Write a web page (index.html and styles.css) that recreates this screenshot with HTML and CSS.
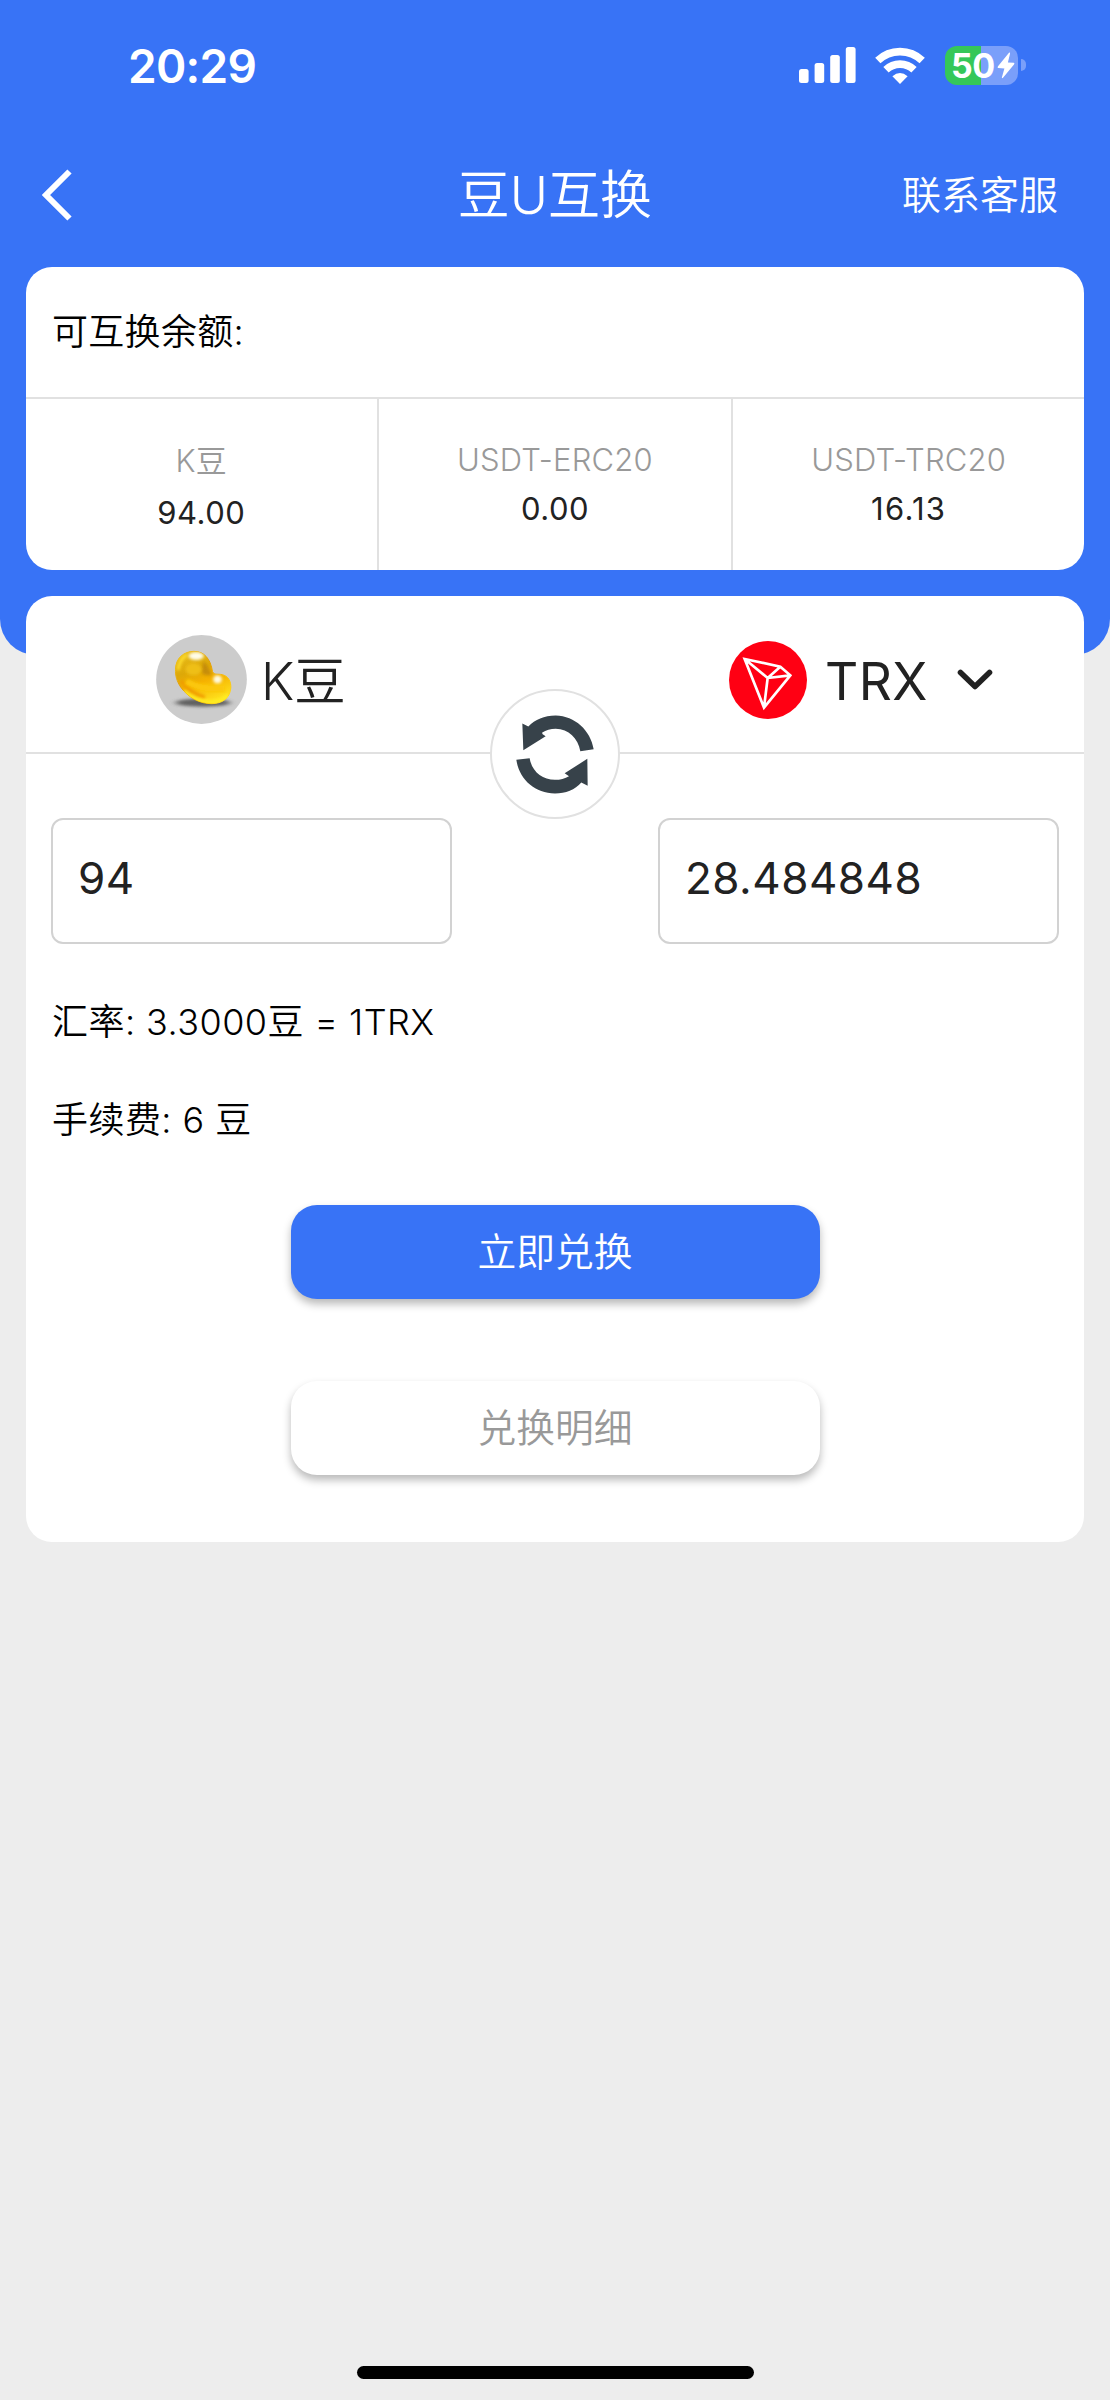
FILE: index.html
```html
<!DOCTYPE html>
<html lang="zh-CN">
<head>
<meta charset="utf-8">
<title>豆U互换</title>
<link rel="stylesheet" href="styles.css">
</head>
<body>
<div class="screen">
  <div class="top-bg">
    <div class="status">
      <span class="clock">20:29</span>
      <div class="status-icons">
        <svg class="signal" viewBox="0 0 57 36"><g fill="#fff"><rect x="0" y="22" width="9.6" height="14" rx="2.5"/><rect x="15.6" y="16" width="9.6" height="20" rx="2.5"/><rect x="31.2" y="8" width="9.6" height="28" rx="2.5"/><rect x="46.8" y="0" width="9.8" height="36" rx="2.5"/></g></svg>
        <svg class="wifi" viewBox="0 0 50 37"><g fill="none" stroke="#fff" stroke-width="7.6"><path d="M2.8 13.6A32 32 0 0 1 47.2 13.6"/><path d="M11 22.8A20 20 0 0 1 39 22.8"/></g><path d="M25 37L17.4 29.2Q25 22.8 32.6 29.2Z" fill="#fff"/></svg>
        <div class="battery">
          <div class="battery-body"><span>50</span><svg class="bolt" viewBox="0 0 18 27"><path d="M12 .8Q13.4 0 13 1.8L10.9 10.4L16.8 10.8Q18 11.2 17 12.4L6 25.8Q4.400 27 5 25L7.400 16.400L1.200 16Q0 15.600 1 14.200Z" fill="#fff"/></svg></div>
          <div class="battery-cap"></div>
        </div>
      </div>
    </div>
    <header class="nav">
      <svg class="back" viewBox="0 0 30 52"><path d="M27.500 2.500L4 26L27.500 49.500" fill="none" stroke="#fff" stroke-width="6"/></svg>
      <h1 class="title">豆U互换</h1>
      <a class="support">联系客服</a>
    </header>
  </div>

  <main class="content">
    <section class="card balance">
      <h2 class="balance-title">可互换余额:</h2>
      <div class="balance-row">
        <div class="cell cell-cjk"><span class="label">K豆</span><span class="amount">94.00</span></div>
        <div class="cell"><span class="label">USDT-ERC20</span><span class="amount">0.00</span></div>
        <div class="cell"><span class="label">USDT-TRC20</span><span class="amount amount-wide">16.13</span></div>
      </div>
    </section>

    <section class="card swap">
      <div class="pair">
        <div class="coin from">
          <svg class="bean" viewBox="50 45 272 267">
            <defs>
              <linearGradient id="gold" x1=".2" y1="0" x2=".6" y2="1">
                <stop offset="0" stop-color="#e8bd1c"/><stop offset=".35" stop-color="#dda808"/><stop offset=".6" stop-color="#f5b100"/><stop offset="1" stop-color="#ffe21e"/>
              </linearGradient>
              <linearGradient id="rim" x1="0" y1="0" x2="1" y2="1"><stop offset="0" stop-color="#f0c81c"/><stop offset=".4" stop-color="#e39b00"/><stop offset=".75" stop-color="#ffc400"/><stop offset="1" stop-color="#ffe030"/></linearGradient>
              <filter id="soft" x="-50%" y="-50%" width="200%" height="200%"><feGaussianBlur stdDeviation="4.5"/></filter>
              <filter id="shade" x="-50%" y="-150%" width="200%" height="400%"><feGaussianBlur stdDeviation="9 4"/></filter>
              <clipPath id="beanClip"><path d="M108 148C108 114 134 94 163 94C194 94 213 116 219 155C225 166 236 161 248 164C266 168 275 184 274 204C271 236 247 251 216 251C180 251 147 233 124 202C112 184 107 167 108 148Z"/></clipPath>
            </defs>
            <ellipse cx="186" cy="178.500" rx="136" ry="133.500" fill="#ccc"/>
            <ellipse cx="190" cy="248" rx="82" ry="12" fill="#505050" opacity=".85" filter="url(#shade)"/>
            <path d="M108 148C108 114 134 94 163 94C194 94 213 116 219 155C225 166 236 161 248 164C266 168 275 184 274 204C271 236 247 251 216 251C180 251 147 233 124 202C112 184 107 167 108 148Z" fill="url(#gold)" stroke="url(#rim)" stroke-width="3"/>
            <g clip-path="url(#beanClip)">
              <path d="M192 122Q208 140 217 164Q200 170 186 158Z" fill="#b8800a" filter="url(#soft)" opacity=".7"/>
              <path d="M116 150Q118 120 142 104" fill="none" stroke="#ffdf2e" stroke-width="9" filter="url(#soft)"/>
              <path d="M125 182Q145 216 196 232" fill="none" stroke="#f09a00" stroke-width="10" filter="url(#soft)"/>
              <path d="M140 184Q185 210 255 206" fill="none" stroke="#fcc808" stroke-width="18" filter="url(#soft)"/>
              <ellipse cx="162" cy="148" rx="24" ry="18" fill="#efbf14" filter="url(#soft)"/>
              <path d="M133 214Q170 248 218 246Q248 244 266 226" fill="none" stroke="#ffee20" stroke-width="11" filter="url(#soft)"/>
              <ellipse cx="170" cy="108" rx="23" ry="12" fill="#fffde8" filter="url(#soft)"/>
              <ellipse cx="234" cy="178" rx="13" ry="12" fill="#fffbe2" filter="url(#soft)"/>
            </g>
          </svg>
          <span class="coin-name">K豆</span>
        </div>
        <div class="coin to">
          <svg class="tron" viewBox="87 64 234 234"><circle cx="204" cy="181" r="117" fill="#ff0013"/><path d="M134 118L241 141L271 167L192 264ZM134 118L203 175L192 264M203 175L241 141M203 175L271 167" fill="none" stroke="#fff" stroke-width="8" stroke-linejoin="miter"/></svg>
          <span class="coin-name">TRX</span>
          <svg class="chevron" viewBox="0 0 36 22"><path d="M3.500 3.500L18 17.500L32.500 3.500" fill="none" stroke="#222" stroke-width="5.600" stroke-linecap="round" stroke-linejoin="round"/></svg>
        </div>
        <div class="flip">
          <svg class="flip-icon" viewBox="168 134 234 236"><g fill="#37424a"><path d="M187 159L205 168C226 147 252 135 287 135C345 136 392 180 401 236L361 242C354 203 326 176 287 175C272 175 258 179 246 187L248 191L257 197L190 239Z"/><path d="M169 268L209 263C215 302 246 328 285 328C301 328 315 324 327 317L314 308L382 265L383 346L364 336C345 358 317 369 285 369C224 368 178 327 169 268Z"/></g></svg>
        </div>
      </div>

      <div class="fields">
        <div class="field">94</div>
        <div class="field">28.484848</div>
      </div>
      <p class="info">汇率: 3.3000豆 = 1TRX</p>
      <p class="info">手续费: 6 豆</p>
      <div class="actions">
        <button class="btn primary">立即兑换</button>
        <button class="btn plain">兑换明细</button>
      </div>
    </section>
  </main>
  <div class="home-bar"></div>
</div>
</body>
</html>
```

FILE: styles.css
```css
* { box-sizing: border-box; margin: 0; padding: 0; }
body {
  background: #ededed;
  color: #000;
  font-family: Inter, "Noto Sans CJK SC", sans-serif;
  font-weight: 350;
}
svg { display: block; flex: none; }
.screen { display: flex; flex-direction: column; width: 1110px; height: 2400px; overflow: hidden; }

.top-bg { height: 655px; flex: none; background: #3873f6; border-radius: 0 0 36px 36px; color: #fff; }
.status { height: 130px; display: flex; align-items: center; justify-content: space-between; padding: 0 84px 0 128px; }
.clock { padding-top: 2px; font-size: 46px; font-weight: 600; letter-spacing: -.7px; line-height: 60px; }
.status-icons { display: flex; align-items: center; }
.signal { width: 57px; height: 36px; }
.wifi { width: 50px; height: 37px; margin-left: 19px; }
.battery { display: flex; align-items: center; gap: 3px; margin-left: 20px; }
.battery-body {
  width: 73px; height: 39px; padding-left: 6px; border-radius: 12px;
  display: flex; align-items: center;
  background: linear-gradient(90deg, #35c759 50%, #7a9ffa 50%);
  font-size: 34px; font-weight: 650; letter-spacing: -.5px; line-height: 39px;
}
.bolt { width: 18px; height: 27px; margin-left: 2px; }
.battery-cap { width: 5px; height: 12px; border-radius: 0 6px 6px 0; background: #7a9ffa; }

.nav { height: 130px; display: grid; grid-template-columns: 1fr auto 1fr; align-items: center; padding: 0 52px; }
.back { width: 30px; height: 52px; margin-left: -10px; }
.title { padding-top: 2px; font-size: 52px; font-weight: 350; line-height: 60px; }
.support { justify-self: end; font-size: 39px; line-height: 50px; }

.content { margin-top: -388px; padding: 0 26px; display: flex; flex-direction: column; gap: 26px; }
.card { background: #fff; border-radius: 26px; }
.balance { height: 303px; }
.balance-title { height: 132px; padding: 0 26px; border-bottom: 2.500px solid #e1e1e1; font-size: 36px; font-weight: 350; letter-spacing: .3px; line-height: 131px; }
.balance-row { display: grid; grid-template-columns: repeat(3, 1fr); height: 171px; }
.cell { display: flex; flex-direction: column; align-items: center; padding-top: 36px; }
.cell:first-child { border-right: 2px solid #e1e1e1; }
.cell:last-child { border-left: 2px solid #e1e1e1; }
.cell-cjk .label { padding-top: 1px; }
.cell-cjk .amount { margin-top: 3px; }
.label, .amount { font-size: 31px; line-height: 49px; }
.label { color: #999; letter-spacing: .2px; }
.amount { color: #222; font-weight: 380; letter-spacing: .5px; }
.amount-wide { letter-spacing: 1.300px; }

.swap { height: 946px; }
.pair { position: relative; height: 158px; display: grid; grid-template-columns: 1fr 1fr; border-bottom: 2px solid #e1e1e1; color: #222; }
.coin { display: flex; align-items: center; padding-top: 11px; }
.from { padding-left: 130px; gap: 14px; }
.to { padding-left: 174px; gap: 18px; }
.bean { width: 91px; height: 89px; }
.tron { width: 78px; height: 78px; }
.coin-name { padding-top: 2px; font-size: 51.500px; line-height: 60px; }
.to .coin-name { font-weight: 380; letter-spacing: .4px; }
.chevron { width: 36px; height: 22px; margin-left: 11px; }
.flip {
  position: absolute; left: 50%; bottom: -67px; width: 130px; height: 130px; margin-left: -65px;
  border: 2.500px solid #e1e1e1; border-radius: 50%; background: #fff;
  display: flex; align-items: center; justify-content: center;
}
.flip-icon { width: 78px; height: 79px; }

.fields { display: flex; justify-content: space-between; padding: 64px 25px 0; }
.field { width: 401px; height: 126px; padding-left: 25px; border: 2px solid #d2d2d2; border-radius: 12px; color: #222; font-size: 44px; font-weight: 370; line-height: 117px; letter-spacing: .5px; }
.info { padding-left: 26px; font-size: 36px; line-height: 50px; margin-top: 48px; letter-spacing: .45px; }
.fields + .info { margin-top: 53px; }
.actions { display: flex; flex-direction: column; align-items: center; gap: 82px; margin-top: 60px; }
.btn {
  width: 529px; height: 94px; border: 0; border-radius: 26px;
  font: inherit; font-size: 38.800px; line-height: 94px;
  box-shadow: 0 5px 8px rgba(0, 0, 0, .28);
}
.primary { background: #3873f6; color: #fff; }
.plain { background: #fff; color: #999; }

.home-bar { width: 397px; height: 13px; margin: auto auto 21px; border-radius: 7px; background: #000; }
```
